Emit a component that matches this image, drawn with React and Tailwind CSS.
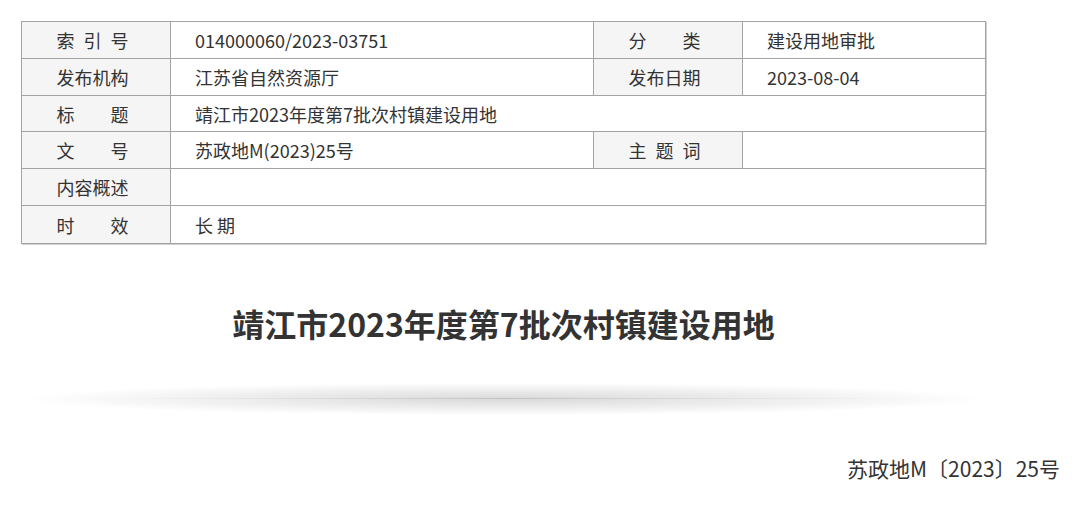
import React from "react";

const font = { fontFamily: '"Noto Sans CJK SC", "Noto Sans", sans-serif' };

const rows = [
    { h: "h-[37px]", cells: [{ label: ["索", "引", "号"], value: "014000060/2023-03751" }, { label: ["分", "类"], value: "建设用地审批" }] },
    { h: "h-[37px]", cells: [{ label: ["发布机构"], value: "江苏省自然资源厅" }, { label: ["发布日期"], value: "2023-08-04" }] },
    { h: "h-[36px]", cells: [{ label: ["标", "题"], value: "靖江市2023年度第7批次村镇建设用地", wide: true }] },
    { h: "h-[37px]", cells: [{ label: ["文", "号"], value: "苏政地M(2023)25号" }, { label: ["主", "题", "词"], value: "" }] },
    { h: "h-[37px]", cells: [{ label: ["内容概述"], value: "", wide: true }] },
    { h: "h-[37px]", cells: [{ label: ["时", "效"], value: "长 期", wide: true }] },
];

const Label = ({ parts }) => (
    <div className="w-[148px] shrink-0 h-full bg-[#f5f5f5] flex items-center justify-center pr-[7px]">
        <div className={`w-[72px] flex ${parts.length > 1 ? "justify-between" : "justify-center"}`}>
            {parts.map((p) => (
                <span key={p}>{p}</span>
            ))}
        </div>
    </div>
);

const App = () => {
    return (
        <div className="w-[1080px] h-[525px] bg-white text-[#333] overflow-hidden" style={font}>
            <div className="pt-[21px] pl-[21px]">
                <div className="w-[965px] border border-[#a3a3a3] shadow-[1px_1px_0_#d0d0d0] text-[18px] leading-none">
                    {rows.map((row, i) => (
                        <div
                            key={i}
                            className={`flex items-stretch ${row.h} ${i < rows.length - 1 ? "border-b border-[#a3a3a3]" : ""}`}
                        >
                            {row.cells.map((c, j) => (
                                <React.Fragment key={j}>
                                    {j > 0 && <div className="w-px bg-[#a3a3a3]" />}
                                    <Label parts={c.label} />
                                    <div className="w-px bg-[#a3a3a3]" />
                                    <div
                                        className={`flex items-center pl-[24px] ${
                                            c.wide ? "flex-1" : j === 0 ? "w-[422px]" : "flex-1"
                                        }`}
                                    >
                                        {c.value}
                                    </div>
                                </React.Fragment>
                            ))}
                        </div>
                    ))}
                </div>
            </div>

            <div className="w-[1007px] flex justify-center pt-[63px]">
                <h1 className="text-[32px] font-bold leading-none text-[#333]">
                    靖江市2023年度第7批次村镇建设用地
                </h1>
            </div>

            <div className="mt-[44px] ml-[30px] w-[950px] h-[32px] relative">
                <div className="h-full bg-[radial-gradient(ellipse_at_center,rgba(0,0,0,0.15)_0%,rgba(0,0,0,0.06)_45%,rgba(255,255,255,0)_72%)]" />
                <div className="absolute left-[60px] right-[60px] top-[15px] h-px bg-[linear-gradient(to_right,rgba(0,0,0,0),rgba(0,0,0,0.1),rgba(0,0,0,0))]" />
            </div>

            <div className="flex justify-end pr-[20px] pt-[43px]">
                <p className="text-[21px] leading-none text-[#333]">苏政地M〔2023〕25号</p>
            </div>
        </div>
    );
};

export default App;
